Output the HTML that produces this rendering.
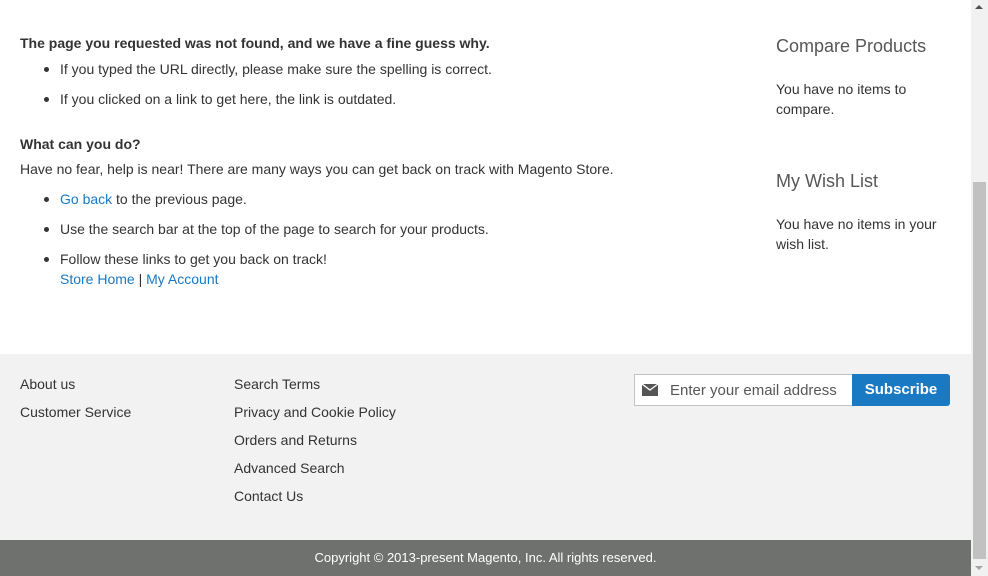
<!DOCTYPE html>
<html><head><style>
*{margin:0;padding:0;box-sizing:border-box}
body{width:988px;height:576px;overflow:hidden;position:relative;background:#fff;font-family:"Liberation Sans",sans-serif;font-size:14px;color:#333}
.a{position:absolute;white-space:nowrap}
a{color:#1979c3;text-decoration:none}
.b{position:absolute;width:5px;height:5px;border-radius:50%;background:#333}
h3{font-weight:300;font-size:18px;color:#575757}
</style></head><body>
<div class="a" style="left:20px;top:35px;font-weight:bold">The page you requested was not found, and we have a fine guess why.</div>
<div class="b" style="left:44px;top:67px"></div><div class="a" style="left:60px;top:61px">If you typed the URL directly, please make sure the spelling is correct.</div>
<div class="b" style="left:44px;top:97px"></div><div class="a" style="left:60px;top:91px">If you clicked on a link to get here, the link is outdated.</div>
<div class="a" style="left:20px;top:136px;font-weight:bold">What can you do?</div>
<div class="a" style="left:20px;top:161px">Have no fear, help is near! There are many ways you can get back on track with Magento Store.</div>
<div class="b" style="left:44px;top:197px"></div><div class="a" style="left:60px;top:191px"><a>Go back</a> to the previous page.</div>
<div class="b" style="left:44px;top:227px"></div><div class="a" style="left:60px;top:221px">Use the search bar at the top of the page to search for your products.</div>
<div class="b" style="left:44px;top:257px"></div><div class="a" style="left:60px;top:251px">Follow these links to get you back on track!</div>
<div class="a" style="left:60px;top:271px"><a>Store Home</a> | <a>My Account</a></div>
<h3 class="a" style="left:776px;top:36px">Compare Products</h3>
<div class="a" style="left:776px;top:79px;line-height:20px">You have no items to<br>compare.</div>
<h3 class="a" style="left:776px;top:171px">My Wish List</h3>
<div class="a" style="left:776px;top:214px;line-height:20px">You have no items in your<br>wish list.</div>
<div style="position:absolute;left:0;top:354px;width:971px;height:186px;background:#f2f2f2"></div>
<div class="a" style="left:20px;top:370px;line-height:28px">About us<br>Customer Service</div>
<div class="a" style="left:234px;top:370px;line-height:28px">Search Terms<br>Privacy and Cookie Policy<br>Orders and Returns<br>Advanced Search<br>Contact Us</div>
<div style="position:absolute;left:634px;top:374px;width:220px;height:32px;background:#fff;border:1px solid #c2c2c2"></div>
<svg class="a" style="left:642px;top:384px" width="16" height="12" viewBox="0 0 16 12"><path d="M0 0h16v12H0z" fill="#555"/><path d="M0 0l8 6 8-6" fill="none" stroke="#fff" stroke-width="1.3"/></svg>
<div class="a" style="left:670px;top:382px;font-size:15px;color:#575757">Enter your email address</div>
<div class="a" style="left:852px;top:374px;width:98px;height:32px;background:#1979c3;border-radius:0 3px 3px 0;color:#fff;font-weight:bold;font-size:15px;text-align:center;line-height:32px">Subscribe</div>
<div style="position:absolute;left:0;top:540px;width:971px;height:36px;background:#6e716e"></div>
<div class="a" style="left:0;width:971px;top:550px;text-align:center;color:#fff;font-size:13px">Copyright © 2013-present Magento, Inc. All rights reserved.</div>
<div style="position:absolute;left:971px;top:0;width:17px;height:576px;background:#f1f1f1"></div>
<div style="position:absolute;left:973px;top:182px;width:13px;height:377px;background:#c1c1c1"></div>
<div class="a" style="left:975px;top:5px;width:0;height:0;border:4px solid transparent;border-bottom-color:#505050;border-top:0"></div>
<div class="a" style="left:975px;top:566px;width:0;height:0;border:4px solid transparent;border-top-color:#a3a3a3;border-bottom:0"></div>
</body></html>
